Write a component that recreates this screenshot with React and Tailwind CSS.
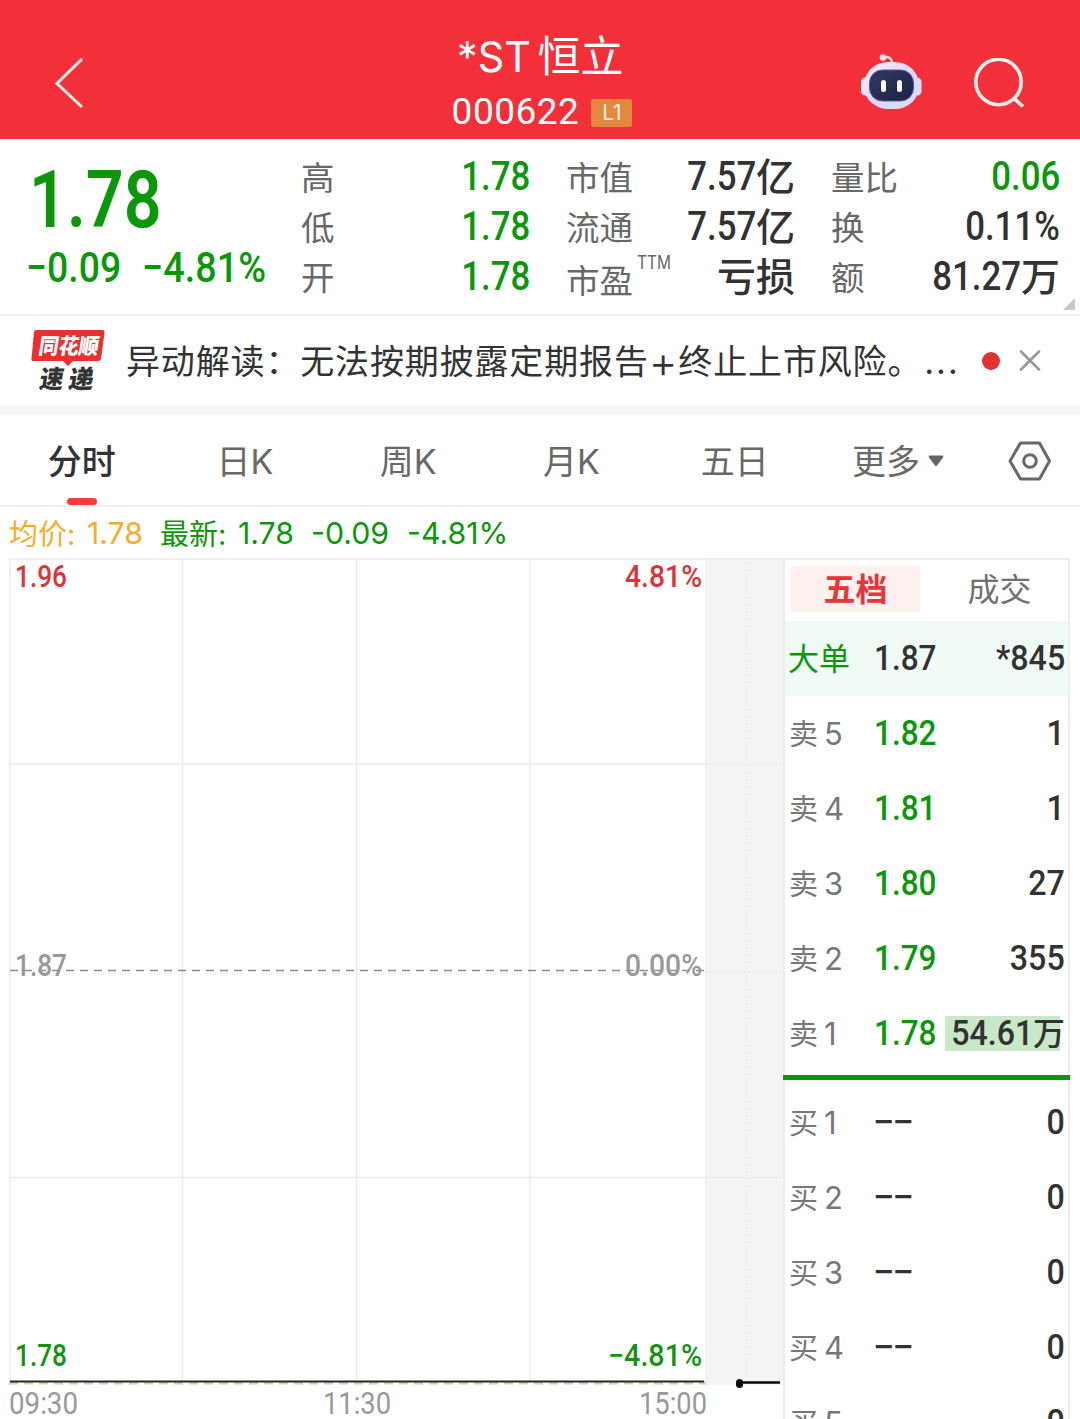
import React from 'react';

const stats = [
    [
        { label: '高', value: '1.78', green: true },
        { label: '低', value: '1.78', green: true },
        { label: '开', value: '1.78', green: true }
    ],
    [
        { label: '市值', value: '7.57', unit: '亿' },
        { label: '流通', value: '7.57', unit: '亿' },
        { label: '市盈', sup: 'TTM', unit: '亏损' }
    ],
    [
        { label: '量比', value: '0.06', green: true },
        { label: '换', value: '0.11%' },
        { label: '额', value: '81.27', unit: '万' }
    ]
];

const tabs = ['分时', '日K', '周K', '月K', '五日'];

const sells = [
    { level: 5, price: '1.82', amount: '1' },
    { level: 4, price: '1.81', amount: '1' },
    { level: 3, price: '1.80', amount: '27' },
    { level: 2, price: '1.79', amount: '355' },
    { level: 1, price: '1.78', amount: '54.61', unit: '万', marked: true }
];

const buys = [1, 2, 3, 4, 5].map((level) => ({ level, price: '--', amount: '0' }));

const Robot = () => (
    <svg width="62" height="58" viewBox="0 0 62 58">
        <defs>
            <linearGradient id="shell" x1="0" y1="0" x2="1" y2="1">
                <stop offset="0" stopColor="#fbf1fc" />
                <stop offset="0.5" stopColor="#dcd8fb" />
                <stop offset="1" stopColor="#d3e0fb" />
            </linearGradient>
            <linearGradient id="visor" x1="0" y1="0" x2="1" y2="1">
                <stop offset="0" stopColor="#303a60" />
                <stop offset="1" stopColor="#1b2345" />
            </linearGradient>
        </defs>
        <path d="M23 4.500C28 3 32 5 32 10" fill="none" stroke="#fbdfe6" strokeWidth="2.400" />
        <circle cx="23" cy="4.500" r="3.300" fill="#ffe3e6" />
        <rect x="1" y="24.500" width="9" height="18" rx="4.500" fill="#f4e9fb" />
        <rect x="52.500" y="24.500" width="9" height="18" rx="4.500" fill="#e4dcf7" />
        <rect x="4.500" y="9" width="54" height="47" rx="24" ry="21" fill="url(#shell)" />
        <rect x="9.500" y="17" width="44" height="31" rx="13" fill="url(#visor)" stroke="#6a4bb8" strokeWidth="1" />
        <rect x="21" y="27" width="5" height="12" rx="2.500" fill="#fff" />
        <rect x="37" y="27" width="5" height="12" rx="2.500" fill="#fff" />
    </svg>
);

const Header = () => (
    <header className="h-[139px] bg-[#f32f39] text-white flex items-start justify-between">
        <div className="w-[220px] pt-[56px] pl-[53px]">
            <svg width="32" height="54" viewBox="0 0 32 54" fill="none" stroke="#fff0ec" strokeWidth="3">
                <path d="M29 3L4 27.500L29 51" />
            </svg>
        </div>
        <div className="flex flex-col items-center pt-[26px]">
            <h1 className="h-[60px] leading-[60px] text-[43px] whitespace-nowrap">
                <span className="inline-block origin-left scale-x-[0.96]">*ST</span>
                <span className="ml-[4px]">恒立</span>
            </h1>
            <div className="h-[50px] mt-px flex items-center pl-[4px]">
                <span className="font-['Roboto'] text-[37px] leading-[50px] tracking-[0.5px]">000622</span>
                <span className="ml-3 mt-px w-[41px] h-[28px] rounded-[2px] bg-[#e5883f] text-[21px] leading-[28px] text-center text-[#fff1e4]">L1</span>
            </div>
        </div>
        <div className="w-[220px] pt-[53px] flex">
            <Robot />
            <svg className="ml-[52px] mt-[5px]" width="54" height="54" viewBox="0 0 54 54" fill="none" stroke="#fff0ec" strokeWidth="3.600">
                <circle cx="24.500" cy="24" r="22.700" />
                <path d="M40 40.500L49 48.500" />
            </svg>
        </div>
    </header>
);

const Quote = () => (
    <section className="relative h-[177px] border-b-2 border-[#f0f0f0] flex">
        <div className="w-[301px] text-[#0a980a] font-['Roboto'] font-medium">
            <div className="pl-[29px] pt-[17px] h-[106px]">
                <span className="inline-block origin-left scale-x-[0.83] text-[80px] leading-[88px] font-semibold">1.78</span>
            </div>
            <div className="pl-[26px] flex text-[42px] leading-[46px] whitespace-nowrap">
                <span className="w-[116px]"><span className="inline-block origin-left scale-x-[0.89]">−0.09</span></span>
                <span className="inline-block origin-left scale-x-[0.9]">−4.81%</span>
            </div>
        </div>
        <div className="flex gap-9 pt-[13px]">
            {stats.map((column, i) => (
                <div key={i} className="w-[229px]">
                    {column.map((item) => (
                        <div key={item.label} className="h-[50px] flex justify-between whitespace-nowrap">
                            <span className={`flex text-[33.5px] leading-[52px] text-[#686868] ${item.sup ? 'pt-[3px]' : ''}`}>
                                {item.label}
                                {item.sup && <span className="ml-1 -mt-[5px] text-[18px] leading-[26px] origin-left scale-x-[0.86]">{item.sup}</span>}
                            </span>
                            <span className={`flex leading-[50px] font-medium ${item.green ? 'text-[#0a980a]' : 'text-[#323232]'}`}>
                                {item.value && <span className="font-['Roboto'] text-[40px] origin-right scale-x-[0.87]">{item.value}</span>}
                                {item.unit && <span className="text-[39px]">{item.unit}</span>}
                            </span>
                        </div>
                    ))}
                </div>
            ))}
        </div>
        <svg className="absolute right-[5px] bottom-[4px]" width="12" height="12" viewBox="0 0 12 12">
            <path d="M12 0V12H0Z" fill="#c8c8c8" />
        </svg>
    </section>
);

const News = () => (
    <section className="h-[99px] border-b-[9px] border-[#f5f5f5] flex items-center">
        <svg className="ml-[30px] -mt-[3px] overflow-visible" width="76" height="64" viewBox="0 0 76 64">
            <path d="M6 2H72Q75 2 74.500 5L71 31Q70.500 33 68 33H43L38 38L33 33H4Q1 33 1.500 31L4 4Q4.500 2 6 2Z" fill="#e92f30" />
            <g fontFamily="Noto Sans CJK SC" fontWeight="900" transform="skewX(-9)">
                <text x="12" y="26" fontSize="22" fill="#fff" textLength="60" lengthAdjust="spacingAndGlyphs">同花顺</text>
                <text x="18" y="60" fontSize="25" fill="#333" textLength="24" lengthAdjust="spacingAndGlyphs">速</text>
                <text x="47" y="60" fontSize="25" fill="#333" textLength="25" lengthAdjust="spacingAndGlyphs">递</text>
            </g>
        </svg>
        <p className="ml-[20px] pt-[2px] w-[833px] flex items-center text-[34px] leading-[50px] tracking-[0.85px] text-[#333] whitespace-nowrap">
            异动解读：无法按期披露定期报告
            <span className="w-[32px] flex justify-center text-[44px] font-light">+</span>
            终止上市风险。
            <span className="ml-[2px] tracking-[2px]">...</span>
        </p>
        <span className="ml-[23px] w-[18px] h-[18px] rounded-full bg-[#e33033]" />
        <svg className="ml-[19px]" width="22" height="22" viewBox="0 0 22 22" stroke="#999" strokeWidth="2.600" strokeLinecap="round">
            <path d="M2 1.500L20 19.500M20 1.500L2 19.500" />
        </svg>
    </section>
);

const Tabs = () => (
    <nav className="h-[92px] border-b-2 border-[#f0f0f0] flex text-[34px] text-[#686868]">
        {tabs.map((tab, i) => (
            <div key={tab} className={`w-[163.300px] flex flex-col items-center ${i === 0 ? 'font-medium text-[#323232]' : ''}`}>
                <span className="h-[83px] leading-[94px]">{tab}</span>
                {i === 0 && <span className="w-[30px] h-[8px] rounded-[4px] bg-[#fb3c36]" />}
            </div>
        ))}
        <div className="w-[163px] flex items-start justify-center gap-2">
            <span className="leading-[94px]">更多</span>
            <svg className="mt-[40px]" width="16" height="12" viewBox="0 0 16 12">
                <path d="M1.500 0.500H14.500Q16 1 15 2.500L9 10.500Q8 11.500 7 10.500L1 2.500Q0 1 1.500 0.500Z" fill="#666" />
            </svg>
        </div>
        <div className="flex-1 flex items-center justify-center pt-px">
            <svg width="44" height="40" viewBox="0 0 44 40" fill="none" stroke="#686868" strokeWidth="3">
                <path d="M12.500 2H31.500L41.500 20L31.500 38H12.500L2 20Z" strokeLinejoin="round" />
                <circle cx="22" cy="20" r="6.300" />
            </svg>
        </div>
    </nav>
);

const Summary = () => (
    <div className="h-[51px] pt-[2px] pl-[9px] flex items-center whitespace-nowrap text-[30.3px] text-[#0a980a]">
        <span className="w-[151px] flex items-center text-[#f7ad27]">
            <span className="w-[78px] pt-[2px] text-[29px]">均价:</span>1.78
        </span>
        <span className="w-[151px] flex items-center">
            <span className="w-[78px] pt-[2px] text-[29px]">最新:</span>1.78
        </span>
        <span className="w-[96px]">-0.09</span>
        <span>-4.81%</span>
    </div>
);

const ChartLabel = ({ x, y, width, fill, weight = 500, children }) => (
    <text x={x} y={y} fill={fill} fontFamily="Roboto" fontSize="30.500" fontWeight={weight} textLength={width} lengthAdjust="spacingAndGlyphs">
        {children}
    </text>
);

// y values are measured from the top border of the plot
const Chart = () => (
    <svg className="shrink-0 overflow-visible" width="783" height="861" viewBox="0 0 783 861" fill="none">
        <rect x="707" y="0" width="76" height="827" fill="#f4f4f4" />
        <g stroke="#ebebeb" strokeWidth="1.500">
            <path d="M9 1H783M10 0V824M182.500 0V824M356.500 0V824M530 0V824M706 0V827" />
            <path d="M9 206H706M9 619.500H706" />
            <path d="M706 206H783M706 414H783M706 619.500H783" stroke="#eeeeee" />
            <path d="M746 4V824" stroke="#e8e8e8" strokeDasharray="2 5" />
        </g>
        <path d="M10 412.500H706" stroke="#8c8c8c" strokeWidth="1.500" strokeDasharray="8 6" />
        <path d="M9 825H706" stroke="#d8ccb8" strokeWidth="3" strokeDasharray="9 6" />
        <path d="M10 823.500H704" stroke="#2c2620" strokeWidth="2" />
        <path d="M740 824.500H780" stroke="#0a0a0a" strokeWidth="2.500" />
        <rect x="736" y="821" width="7" height="9" rx="3.500" fill="#0a0a0a" />
        <ChartLabel x={15} y={29} width={52} fill="#dc3338">1.96</ChartLabel>
        <ChartLabel x={625} y={29} width={77} fill="#dc3338">4.81%</ChartLabel>
        <ChartLabel x={15} y={418} width={52} fill="#999">1.87</ChartLabel>
        <ChartLabel x={625} y={418} width={77} fill="#999">0.00%</ChartLabel>
        <ChartLabel x={15} y={808} width={52} fill="#129412">1.78</ChartLabel>
        <ChartLabel x={608} y={808} width={94} fill="#129412">−4.81%</ChartLabel>
        <ChartLabel x={9} y={856} width={69} fill="#999" weight={400}>09:30</ChartLabel>
        <ChartLabel x={323} y={856} width={68} fill="#999" weight={400}>11:30</ChartLabel>
        <ChartLabel x={639} y={856} width={68} fill="#999" weight={400}>15:00</ChartLabel>
    </svg>
);

const BookRow = ({ side, row }) => (
    <div className="h-[75px] pt-[2px] pl-[4px] pr-[3px] flex items-center text-[#323232] whitespace-nowrap">
        <span className="w-[85px] shrink-0 text-[29px] text-[#777]">{side}<span className="ml-[6px] text-[31px]">{row.level}</span></span>
        {row.price === '--' ? (
            <span className="-ml-px inline-block origin-left scale-x-[1.1] font-['Roboto'] font-medium text-[35px] tracking-[-2px]">−−</span>
        ) : (
            <span className="w-[66px] shrink-0 font-['Roboto'] font-medium text-[35px] text-[#0a980a]">
                <span className="inline-block origin-left scale-x-[0.9]">{row.price}</span>
            </span>
        )}
        <span className={`ml-auto -mt-[2px] h-[35px] leading-[35px] flex font-medium ${row.marked ? 'bg-[linear-gradient(to_right,transparent_1px,#c9e8c8_1px,#c9e8c8_116px,transparent_116px)]' : ''}`}>
            <span className="font-['Roboto'] text-[35px] origin-right scale-x-[0.92]">{row.amount}</span>
            {row.unit && <span className="text-[32px]">{row.unit}</span>}
        </span>
    </div>
);

const OrderBook = () => (
    <div className="w-[287px] shrink-0 border-x-2 border-t-2 border-[#eeeeee]">
        <div className="h-[61px] pt-[6px] pl-[6px] flex text-[32px] leading-[47px]">
            <span className="w-[129px] h-[46px] shrink-0 rounded-[2px] bg-[#fff0f0] text-center font-bold text-[#e93535]">五档</span>
            <span className="flex-1 pl-[11px] text-center text-[#707070]">成交</span>
        </div>
        <div className="h-[75px] pt-[2px] pl-[3px] pr-[3px] bg-[#f0faf5] flex items-center text-[35px] text-[#323232]">
            <span className="w-[86px] text-[31px] text-[#0a980a]">大单</span>
            <span className="font-['Roboto'] font-medium origin-left scale-x-[0.9]">1.87</span>
            <span className="ml-auto font-['Roboto'] font-medium origin-right scale-x-[0.92]">*845</span>
        </div>
        {sells.map((row) => <BookRow key={row.level} side="卖" row={row} />)}
        <div className="h-[5px] -mx-[2px] mt-[4px] mb-[5px] bg-[#0a980a]" />
        {buys.map((row) => <BookRow key={row.level} side="买" row={row} />)}
    </div>
);

const App = () => (
    <div lang="zh-CN" className="w-[1080px] h-[1419px] overflow-hidden flex flex-col bg-white font-['Inter','Noto_Sans_CJK_SC',sans-serif]">
        <Header />
        <Quote />
        <News />
        <Tabs />
        <Summary />
        <main className="h-[861px] flex">
            <Chart />
            <OrderBook />
        </main>
    </div>
);

export default App;
